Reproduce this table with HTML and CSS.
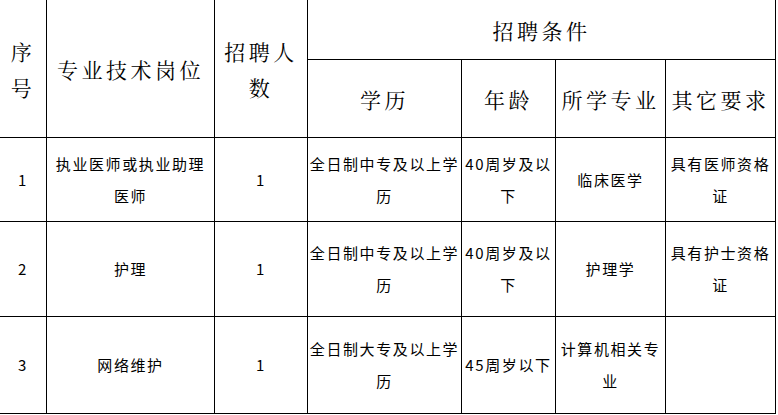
FILE: index.html
```html
<!DOCTYPE html>
<html lang="zh-CN">
<head>
<meta charset="utf-8">
<title>招聘岗位</title>
<link rel="stylesheet" href="styles.css">
</head>
<body>
<table class="jobs">
  <colgroup>
    <col class="c-no">
    <col class="c-post">
    <col class="c-num">
    <col class="c-edu">
    <col class="c-age">
    <col class="c-major">
    <col class="c-other">
  </colgroup>
  <thead>
    <tr class="h1">
      <th rowspan="2">序号</th>
      <th rowspan="2">专业技术岗位</th>
      <th rowspan="2">招聘人数</th>
      <th colspan="4">招聘条件</th>
    </tr>
    <tr class="h2">
      <th>学历</th>
      <th>年龄</th>
      <th>所学专业</th>
      <th>其它要求</th>
    </tr>
  </thead>
  <tbody>
    <tr class="r1">
      <td>1</td>
      <td>执业医师或执业助理医师</td>
      <td>1</td>
      <td>全日制中专及以上学历</td>
      <td>40周岁及以下</td>
      <td>临床医学</td>
      <td>具有医师资格证</td>
    </tr>
    <tr class="r2">
      <td>2</td>
      <td>护理</td>
      <td>1</td>
      <td>全日制中专及以上学历</td>
      <td>40周岁及以下</td>
      <td>护理学</td>
      <td>具有护士资格证</td>
    </tr>
    <tr class="r3">
      <td>3</td>
      <td>网络维护</td>
      <td>1</td>
      <td>全日制大专及以上学历</td>
      <td>45周岁以下</td>
      <td>计算机相关专业</td>
      <td></td>
    </tr>
  </tbody>
</table>
</body>
</html>
```

FILE: styles.css
```css
html, body {
  margin: 0;
  padding: 0;
  background: #ffffff;
}

.jobs {
  border-collapse: separate;
  border-spacing: 0;
  table-layout: fixed;
  width: 776px;
  color: #000;
}

.c-no { width: 47px; }
.c-post { width: 168px; }
.c-num { width: 93px; }
.c-edu { width: 154px; }
.c-age { width: 94px; }
.c-major { width: 110px; }
.c-other { width: 110px; }

.jobs th,
.jobs td {
  border-right: 1px solid #000;
  border-bottom: 1px solid #000;
  padding: 0 1px;
  text-align: center;
  vertical-align: middle;
  overflow: hidden;
}

.jobs th {
  font-family: "Noto Serif CJK SC", "Noto Sans CJK SC", serif;
  font-weight: normal;
  font-size: 21px;
  letter-spacing: 3.5px;
  line-height: 36px;
}

.jobs td {
  font-family: "Noto Sans CJK SC", sans-serif;
  font-size: 15px;
  letter-spacing: 1.6px;
  line-height: 32px;
}

.h1 { height: 60px; }
.h2 { height: 78px; }
.r1 { height: 84px; }
.r2 { height: 95px; }
.r3 { height: 97px; }
```
